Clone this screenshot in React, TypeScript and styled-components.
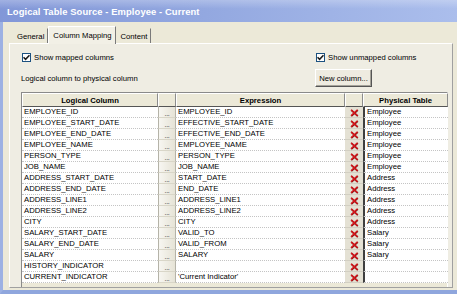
import { FC, Fragment } from "react";
import styled, { createGlobalStyle } from "styled-components";

const GlobalStyle = createGlobalStyle`
  html, body {
    margin: 0;
    padding: 0;
    background: #ece9d8;
  }
  * {
    box-sizing: border-box;
  }
`;

const FONT = `"Liberation Sans", Arial, sans-serif`;

const Window = styled.div`
  width: 457px;
  height: 294px;
  display: flex;
  flex-direction: column;
  overflow: hidden;
  font-family: ${FONT};
  font-size: 7.7px;
  color: #000;
  background: #ece9d8;
`;

const TitleBar = styled.div`
  height: 22px;
  flex: none;
  display: flex;
  align-items: center;
  padding-left: 7px;
  background: linear-gradient(to bottom, rgba(255, 255, 255, 0.25), rgba(255, 255, 255, 0) 40%),
    linear-gradient(to right, #8297d8 0%, #93a8e0 45%, #abbeec 100%);
  color: #fff;
  font-weight: bold;
  font-size: 9.4px;
  letter-spacing: 0.1px;
`;

const Body = styled.div`
  flex: 1;
  display: flex;
  flex-direction: column;
  border-left: 3px solid #9db1e3;
  border-bottom: 4px solid #8fa6dd;
  padding: 3px 4px 2px 3px;
`;

const TabStrip = styled.div`
  height: 18px;
  display: flex;
  align-items: flex-end;
  padding-left: 7px;
`;

const Tab = styled.div<{ $active?: boolean }>`
  height: ${({ $active }) => ($active ? "18px" : "15px")};
  display: flex;
  align-items: center;
  padding: 0 ${({ $active }) => ($active ? "4px" : "3px")};
  background: ${({ $active }) => ($active ? "#f2f0e6" : "#ece9d8")};
  border-top: 1px solid ${({ $active }) => ($active ? "#fff" : "transparent")};
  border-left: 1px solid ${({ $active }) => ($active ? "#fff" : "transparent")};
  border-right: 1px solid #7a7a7a;
  position: relative;
  z-index: ${({ $active }) => ($active ? 1 : 0)};
  margin-bottom: ${({ $active }) => ($active ? "-1px" : "0")};
  white-space: nowrap;
`;

const Panel = styled.div`
  flex: 1;
  margin-left: 3px;
  border-top: 1px solid #fff;
  border-left: 1px solid #fff;
  border-right: 1px solid #a0a0a0;
  border-bottom: 1px solid #a0a0a0;
  background: #efede3;
  padding: 7px 3px 0 11px;
  display: flex;
  flex-direction: column;
`;

const Controls = styled.div`
  display: grid;
  grid-template-columns: 1fr 134px;
  grid-template-rows: 13px 22px;
  row-gap: 3px;
  align-items: center;
  margin-bottom: 3px;
`;

const CheckRow = styled.label`
  display: flex;
  align-items: center;
  gap: 3px;
  white-space: nowrap;
`;

const CheckBox = styled.span`
  width: 9px;
  height: 9px;
  border: 1px solid #1c5180;
  background: #fff;
  display: flex;
  align-items: center;
  justify-content: center;
  margin-left: 1px;
`;

const Caption = styled.span`
  white-space: nowrap;
`;

const Button = styled.div`
  width: 57px;
  height: 18px;
  display: flex;
  align-items: center;
  justify-content: center;
  border-top: 1px solid #fff;
  border-left: 1px solid #fff;
  border-right: 1px solid #555;
  border-bottom: 1px solid #555;
  box-shadow: inset -1px -1px 0 #a5a39a;
  background: #eeebe0;
  white-space: nowrap;
`;

const TableFrame = styled.div`
  flex: 1;
  margin-right: 1px;
  border-top: 1px solid #8a8a8a;
  border-left: 1px solid #8a8a8a;
  border-right: 1px solid #fff;
  background: #ece9d8;
  display: grid;
  grid-template-columns: 136px 18px 169px 18px 85px;
  grid-auto-rows: 11px;
  grid-template-rows: 14px;
  align-content: start;
`;

const HeadCell = styled.div`
  display: flex;
  align-items: center;
  justify-content: center;
  font-weight: bold;
  background: #ece9d8;
  border-top: 1px solid #fff;
  border-left: 1px solid #fff;
  border-right: 1px solid #8c8c8c;
  border-bottom: 1px solid #555;
  white-space: nowrap;
`;

const TextCell = styled.div<{ $marked?: boolean }>`
  display: flex;
  align-items: center;
  padding-left: 2px;
  background: #fff;
  border-bottom: 1px dotted #c4c4c4;
  border-left: ${({ $marked }) => ($marked ? "2px solid #3f3f3f" : "none")};
  white-space: nowrap;
  overflow: hidden;
  line-height: 1;
`;

const DotsButton = styled.div`
  display: flex;
  align-items: flex-end;
  justify-content: center;
  background: linear-gradient(to right, #f7f6f1, #e6e3d6);
  border-left: 1px solid #b5b3a8;
  border-right: 1px solid #b5b3a8;
  border-bottom: 1px solid #d9d6c8;
  font-size: 7px;
  line-height: 6px;
  color: #333;
  letter-spacing: -0.3px;
`;

const DeleteCell = styled.div`
  display: flex;
  align-items: center;
  justify-content: center;
  padding-top: 1px;
  background: #e4e1d4;
  border-bottom: 1px solid #d2cfc2;
`;

const CheckMark: FC = () => (
  <svg width="7" height="7" viewBox="0 0 7 7">
    <path d="M0.5 3.2 L2.6 5.3 L6.5 1.2" fill="none" stroke="#1a1a1a" strokeWidth="1.6" />
  </svg>
);

const RedX: FC = () => (
  <svg width="9" height="8" viewBox="0 0 9 8">
    <path d="M1.3 1.2 L7.8 7.2" stroke="#7a1414" strokeWidth="1.7" />
    <path d="M7.8 1.2 L1.3 7.2" stroke="#7a1414" strokeWidth="1.7" />
    <path d="M1 0.8 L7.5 6.8" stroke="#d9161c" strokeWidth="1.2" />
    <path d="M7.5 0.8 L1 6.8" stroke="#d9161c" strokeWidth="1.2" />
  </svg>
);

interface Mapping {
  logical: string;
  expression: string;
  table: string;
}

const mappings: Mapping[] = [
  { logical: "EMPLOYEE_ID", expression: "EMPLOYEE_ID", table: "Employee" },
  { logical: "EMPLOYEE_START_DATE", expression: "EFFECTIVE_START_DATE", table: "Employee" },
  { logical: "EMPLOYEE_END_DATE", expression: "EFFECTIVE_END_DATE", table: "Employee" },
  { logical: "EMPLOYEE_NAME", expression: "EMPLOYEE_NAME", table: "Employee" },
  { logical: "PERSON_TYPE", expression: "PERSON_TYPE", table: "Employee" },
  { logical: "JOB_NAME", expression: "JOB_NAME", table: "Employee" },
  { logical: "ADDRESS_START_DATE", expression: "START_DATE", table: "Address" },
  { logical: "ADDRESS_END_DATE", expression: "END_DATE", table: "Address" },
  { logical: "ADDRESS_LINE1", expression: "ADDRESS_LINE1", table: "Address" },
  { logical: "ADDRESS_LINE2", expression: "ADDRESS_LINE2", table: "Address" },
  { logical: "CITY", expression: "CITY", table: "Address" },
  { logical: "SALARY_START_DATE", expression: "VALID_TO", table: "Salary" },
  { logical: "SALARY_END_DATE", expression: "VALID_FROM", table: "Salary" },
  { logical: "SALARY", expression: "SALARY", table: "Salary" },
  { logical: "HISTORY_INDICATOR", expression: "", table: "" },
  { logical: "CURRENT_INDICATOR", expression: "'Current Indicator'", table: "" },
];

const App: FC = () => {
  return (
    <>
      <GlobalStyle />
      <Window>
        <TitleBar>Logical Table Source - Employee - Current</TitleBar>
        <Body>
          <TabStrip>
            <Tab>General</Tab>
            <Tab $active>Column Mapping</Tab>
            <Tab>Content</Tab>
          </TabStrip>
          <Panel>
            <Controls>
              <CheckRow>
                <CheckBox>
                  <CheckMark />
                </CheckBox>
                Show mapped columns
              </CheckRow>
              <CheckRow>
                <CheckBox>
                  <CheckMark />
                </CheckBox>
                Show unmapped columns
              </CheckRow>
              <Caption>Logical column to physical column</Caption>
              <Button>New column...</Button>
            </Controls>
            <TableFrame>
              <HeadCell>Logical Column</HeadCell>
              <HeadCell />
              <HeadCell>Expression</HeadCell>
              <HeadCell />
              <HeadCell>Physical Table</HeadCell>
              {mappings.map((row) => (
                <Fragment key={row.logical}>
                  <TextCell>{row.logical}</TextCell>
                  <DotsButton>...</DotsButton>
                  <TextCell>{row.expression}</TextCell>
                  <DeleteCell>
                    <RedX />
                  </DeleteCell>
                  <TextCell $marked>{row.table}</TextCell>
                </Fragment>
              ))}
            </TableFrame>
          </Panel>
        </Body>
      </Window>
    </>
  );
};

export default App;
